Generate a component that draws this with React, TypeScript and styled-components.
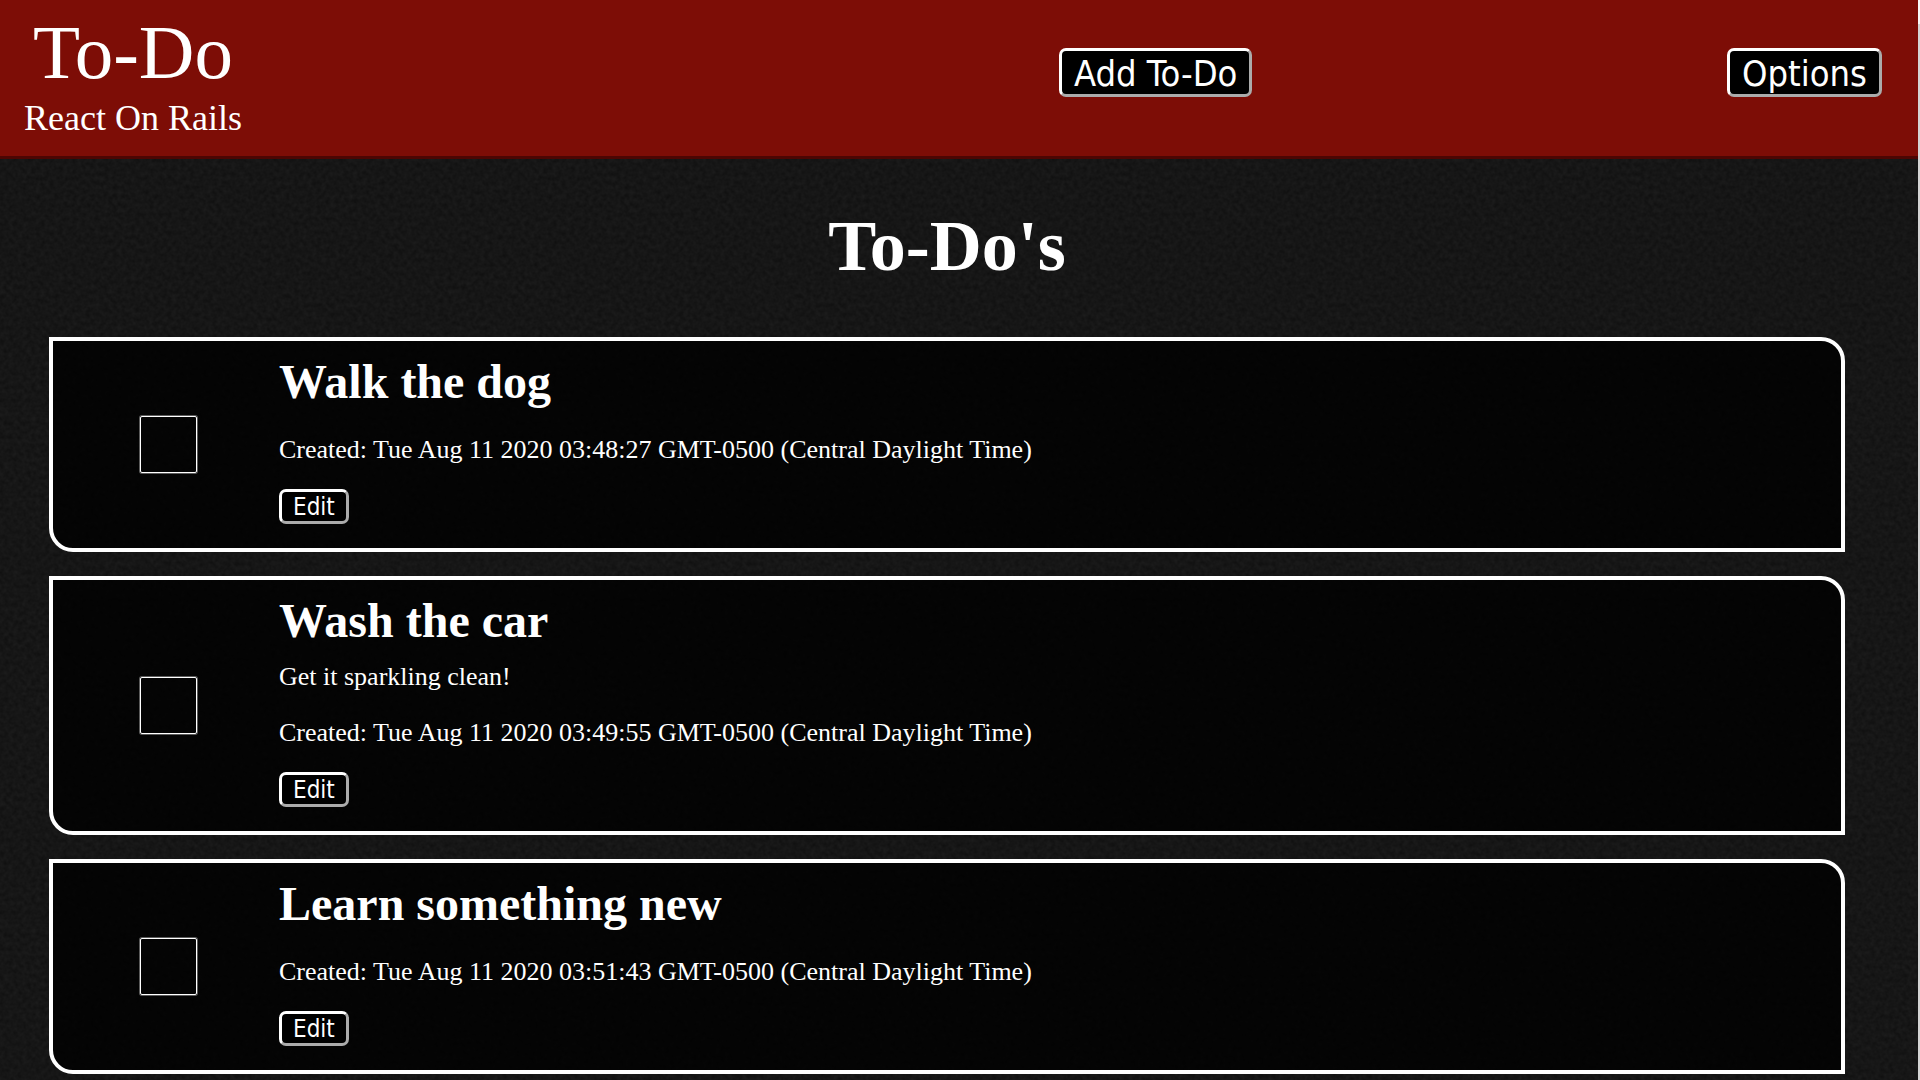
import React from "react";
import styled, { createGlobalStyle } from "styled-components";

const texture = `url("data:image/svg+xml,${encodeURIComponent(
  `<svg xmlns="http://www.w3.org/2000/svg" width="512" height="512"><filter id="n" x="0" y="0" width="100%" height="100%" color-interpolation-filters="sRGB"><feTurbulence type="fractalNoise" baseFrequency="0.22" numOctaves="2" seed="7" stitchTiles="stitch"/><feColorMatrix values="0.06 0 0 0 0.056  0.06 0 0 0 0.056  0.06 0 0 0 0.056  0 0 0 0 1"/></filter><rect width="512" height="512" filter="url(#n)"/></svg>`
)}")`;

const GlobalStyle = createGlobalStyle`
  * { box-sizing: border-box; }
  body {
    margin: 0;
    color: #fff;
    background: #161616 ${texture};
    font-family: "Liberation Serif", "Times New Roman", serif;
  }
`;

const Page = styled.div`
  min-height: 100vh;
  border-right: 2px solid;
  border-image: linear-gradient(#f8f8f8 26px, #d4d4d4 26px) 2;
`;

const Header = styled.header`
  display: flex;
  justify-content: space-between;
  align-items: center;
  padding: 0 36px 0 24px;
  height: 159px;
  background: #7d0d06;
  border-bottom: 3px solid #4c0603;
`;

const Brand = styled.div`
  text-align: center;
`;

const BrandName = styled.div`
  font-size: 77px;
  line-height: 88px;
`;

const Tagline = styled.div`
  font-size: 36px;
  line-height: 44px;
  padding-bottom: 8px;
`;

const Actions = styled.nav`
  display: flex;
  justify-content: space-between;
  width: 44.3%;
  padding-bottom: 12px;
`;

const Button = styled.button<{ $large?: boolean }>`
  display: block;
  padding: 2px ${(p) => (p.$large ? 12 : 11)}px 0;
  color: #fff;
  background: #000;
  border: 3px outset #fff;
  border-radius: 7px;
  font-family: "DejaVu Sans Condensed", "Tahoma", sans-serif;
  font-size: ${(p) => (p.$large ? 36 : 24)}px;
  line-height: ${(p) => (p.$large ? 41 : 27)}px;
`;

const Main = styled.main`
  padding: 46px 73px 24px 49px;
`;

const Title = styled.h1`
  margin: 0 0 50px;
  font-size: 72px;
  line-height: 82px;
  text-align: center;
`;

const List = styled.ul`
  display: grid;
  gap: 24px;
  margin: 0;
  padding: 0;
  list-style: none;
`;

const Card = styled.li`
  display: grid;
  grid-template-columns: 226px 1fr;
  align-items: center;
  background: rgba(0, 0, 0, 0.8);
  border: 4px solid #fff;
  border-radius: 0 24px 0 24px;
`;

const Details = styled.div`
  padding: 13px 0 24px;
`;

const Check = styled.input`
  appearance: none;
  justify-self: center;
  width: 57px;
  height: 57px;
  margin: 0 0 0 4px;
  border: 1px solid #fff;
  border-radius: 2px;
  box-shadow: 0 0 0 1px rgba(255, 255, 255, 0.35);
  &:checked { background: #fff; }
`;

const TaskName = styled.h2`
  margin: 0;
  font-size: 48px;
  line-height: 56px;
`;

const Note = styled.p`
  margin: 13px 0 26px;
  font-size: 26px;
  line-height: 30px;
`;

const Created = styled.p`
  margin: 25px 0 24px;
  font-size: 26px;
  line-height: 30px;
`;

const todos = [
  { name: "Walk the dog", note: "", time: "03:48:27" },
  { name: "Wash the car", note: "Get it sparkling clean!", time: "03:49:55" },
  { name: "Learn something new", note: "", time: "03:51:43" },
];

export default function App() {
  return (
    <>
      <GlobalStyle />
      <Page>
        <Header>
          <Brand>
            <BrandName>To-Do</BrandName>
            <Tagline>React On Rails</Tagline>
          </Brand>
          <Actions>
            <Button $large type="button">Add To-Do</Button>
            <Button $large type="button">Options</Button>
          </Actions>
        </Header>
        <Main>
          <Title>To-Do's</Title>
          <List>
            {todos.map((t) => (
              <Card key={t.name}>
                <Check type="checkbox" aria-label={t.name} />
                <Details>
                  <TaskName>{t.name}</TaskName>
                  {t.note && <Note>{t.note}</Note>}
                  <Created>
                    Created: Tue Aug 11 2020 {t.time} GMT-0500 (Central Daylight Time)
                  </Created>
                  <Button type="button">Edit</Button>
                </Details>
              </Card>
            ))}
          </List>
        </Main>
      </Page>
    </>
  );
}
